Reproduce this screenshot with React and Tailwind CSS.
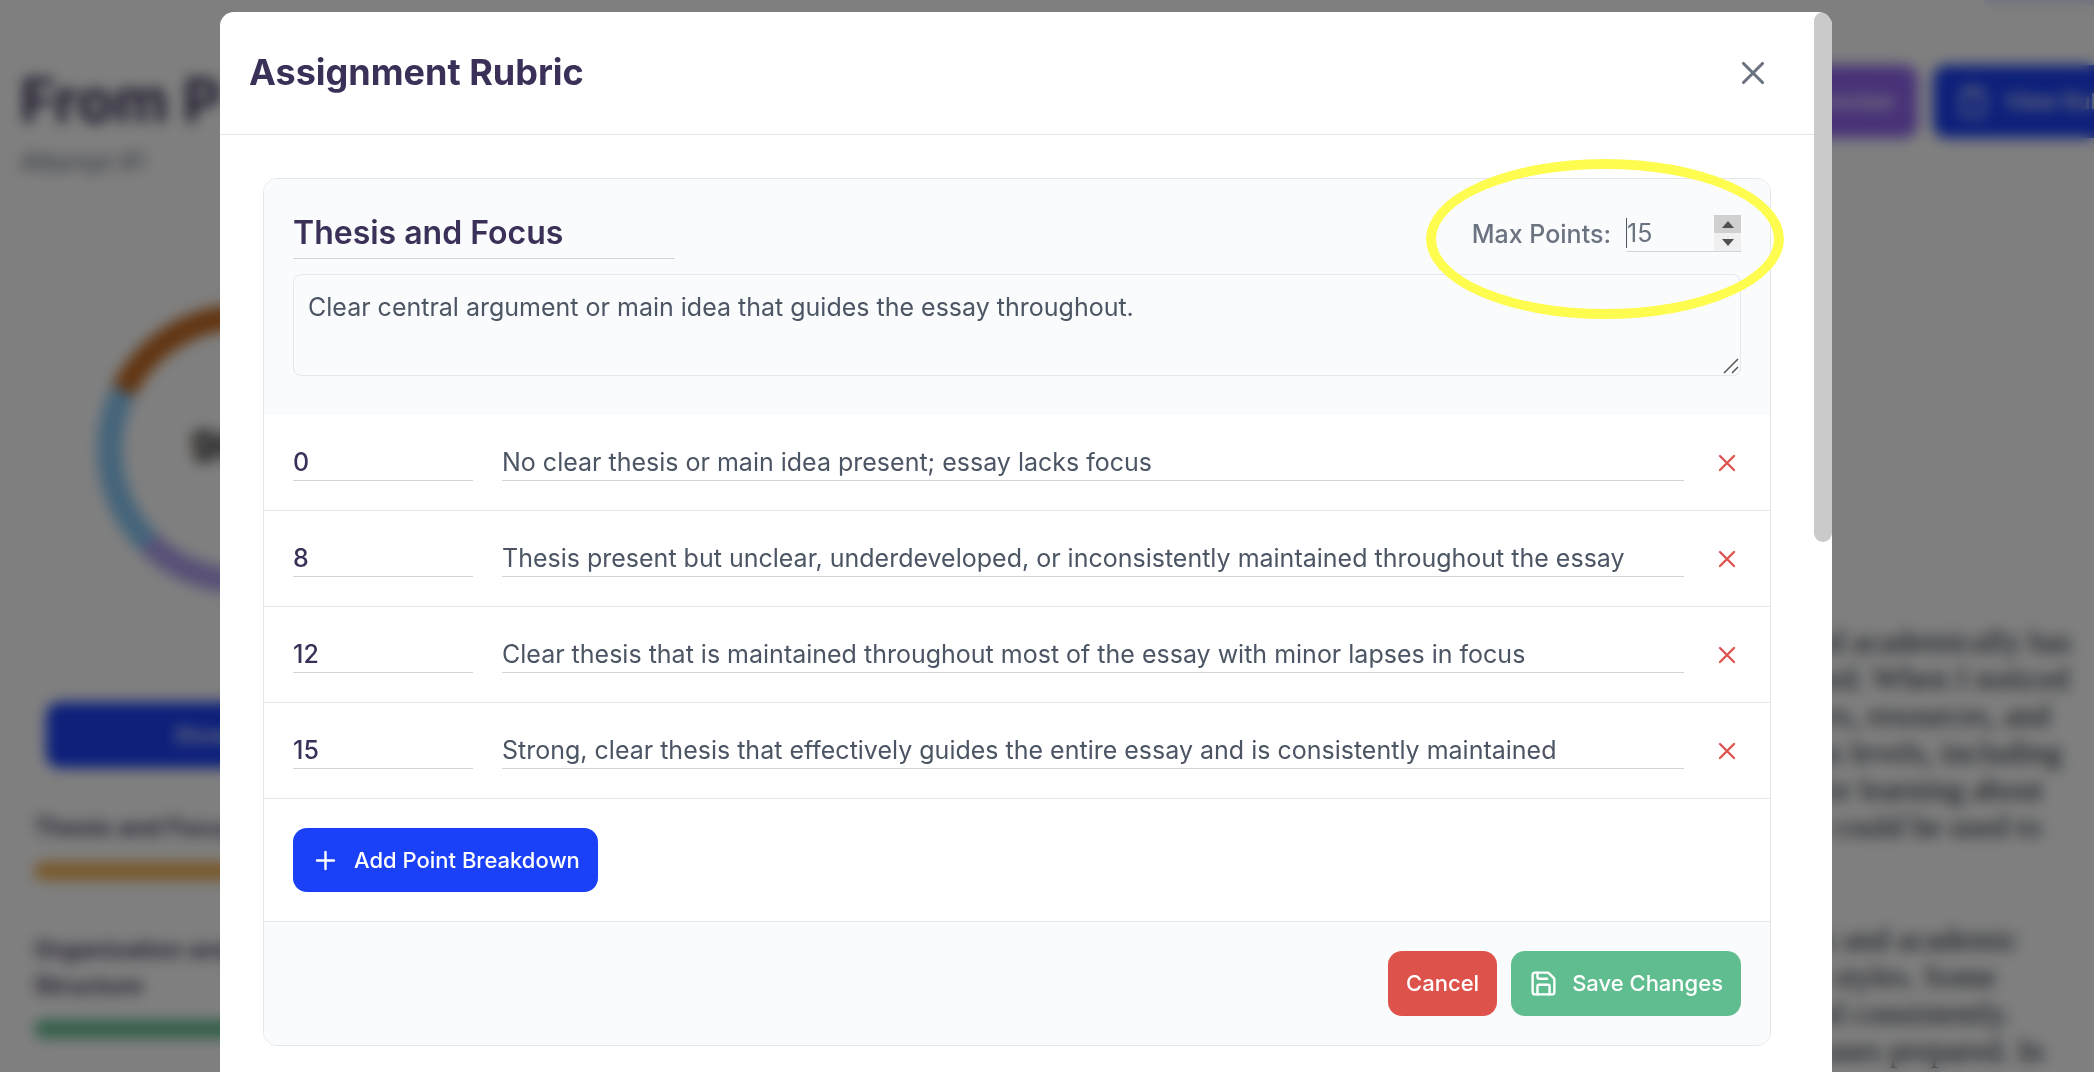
import { useState } from "react";
import { Clipboard, Save } from "lucide-react";

const levels = [
  { points: 0, text: "No clear thesis or main idea present; essay lacks focus" },
  { points: 8, text: "Thesis present but unclear, underdeveloped, or inconsistently maintained throughout the essay" },
  { points: 12, text: "Clear thesis that is maintained throughout most of the essay with minor lapses in focus" },
  { points: 15, text: "Strong, clear thesis that effectively guides the entire essay and is consistently maintained" },
];

const essay = [
  ["ed academically has", "sed. When I noticed", "ers, resources, and", "us levels, including", "for learning about", "I could be used to"],
  ["ts and academic", "s styles. Some", "ed consistently.", "cases prepared. In"],
];

function Cross({ className }) {
  return (
    <svg className={className} viewBox="0 0 24 24" fill="none" stroke="currentColor" strokeWidth="2" strokeLinecap="round" aria-hidden="true">
      <path d="M6 18 18 6M6 6l12 12" />
    </svg>
  );
}

function Plus({ className }) {
  return (
    <svg className={className} viewBox="0 0 24 24" fill="none" stroke="currentColor" strokeWidth="2" strokeLinecap="round" aria-hidden="true">
      <path d="M12 5v14m7-7H5" />
    </svg>
  );
}

function ScoreRing() {
  return (
    <svg className="h-[290px] w-[290px]" viewBox="0 0 290 290" fill="none" strokeWidth="25" role="img" aria-label="Score">
      <path d="M145 13A132 132 0 0 1 277 145A132 132 0 0 1 145 277" stroke="#60bd8f" />
      <path d="M26.5 87A132 132 0 0 1 145 13" stroke="#c46a22" />
      <path d="M52 239A132 132 0 0 1 26.5 87" stroke="#88c8f6" />
      <path d="M145 277A132 132 0 0 1 52 239" stroke="#b0a0ee" />
      <text x="145" y="158" textAnchor="middle" fill="#222" stroke="none" fontSize="44" fontWeight="700">90%</text>
    </svg>
  );
}

function ReportPage() {
  return (
    <main className="h-full overflow-hidden bg-white" aria-hidden="true">
      <div className="flex h-[200px] items-start justify-between pl-5">
        <div className="pt-16">
          <h1 className="text-[60px] leading-[72px] font-bold whitespace-nowrap text-[#3b3158]">From P</h1>
          <p className="pt-2 text-[25px] leading-9 text-gray-500">Attempt #1</p>
        </div>
        <div className="flex flex-col items-end">
          <div className="h-[5px] w-[110px] rounded-bl-lg bg-indigo-100" />
          <div className="flex gap-[15px] pt-[60px]">
            <button tabIndex={-1} className="h-[73px] w-[200px] rounded-[14px] bg-[#9065f0] pr-6 text-right text-[22px] font-medium text-white">Preview</button>
            <button tabIndex={-1} className="flex h-[73px] w-[161px] items-center gap-4 overflow-hidden rounded-l-[14px] bg-[#1a40f5] pl-6 text-[22px] font-medium whitespace-nowrap text-white">
              <Clipboard className="size-[32px] shrink-0" strokeWidth={2} />
              View Rubric
            </button>
          </div>
        </div>
      </div>
      <div className="flex items-start justify-between">
        <div className="flex w-[400px] flex-col pt-[104px] pl-[34px]">
          <div className="pl-[63px]"><ScoreRing /></div>
          <div className="pt-[108px] pl-3">
            <button tabIndex={-1} className="h-[66px] w-full rounded-[14px] bg-[#1a40f5] pl-32 text-left text-[22px] font-medium text-white">Show Details</button>
          </div>
          <p className="pt-[42px] text-[24px] leading-9 font-semibold whitespace-nowrap text-[#3b3158]">Thesis and Focus</p>
          <div className="mt-4 h-[18px] rounded-full bg-[#f0b050]" />
          <p className="w-[240px] pt-[52px] text-[24px] leading-9 font-semibold text-[#3b3158]">Organization and Structure</p>
          <div className="mt-4 h-[18px] rounded-full bg-[#60bd8f]" />
        </div>
        <div className="w-[280px] pt-[423px] font-['Liberation_Serif',serif] text-[32px] leading-[37px] whitespace-nowrap text-gray-900">
          {essay.map((lines, i) => (
            <p key={i} className="pb-[76px]">
              {lines.map((line) => (
                <span key={line} className="block">{line}</span>
              ))}
            </p>
          ))}
        </div>
      </div>
    </main>
  );
}

function LevelRow({ level, index }) {
  return (
    <li className="flex items-center gap-[29px] border-b border-[#e5e7eb] px-[29px] py-[29px]">
      <input
        aria-label={`Level ${index + 1} points`}
        defaultValue={level.points}
        inputMode="numeric"
        className="h-[37px] w-[180px] border-b border-[#d1d5db] bg-transparent pt-[2px] text-[25px] font-medium text-[#3b3158] outline-none"
      />
      <input
        aria-label={`Level ${index + 1} description`}
        defaultValue={level.text}
        className="h-[37px] min-w-0 flex-1 border-b border-[#d1d5db] bg-transparent pt-[2px] text-[25px] text-[#4b5563] outline-none"
      />
      <button aria-label={`Remove level ${index + 1}`} className="text-[#de524c]">
        <Cross className="size-7" />
      </button>
    </li>
  );
}

function MaxPoints() {
  const [value, setValue] = useState(15);
  return (
    <div className="flex items-center gap-[15px]">
      <label htmlFor="max-points" className="text-[25px] leading-9 font-medium text-[#6b7280]">Max Points:</label>
      <div className="flex h-[37px] w-[115px] border-b border-[#d1d5db]">
        <span className="my-[3px] w-px shrink-0 bg-[#4b5563]" />
        <input
          id="max-points"
          inputMode="numeric"
          value={value}
          onChange={(e) => setValue(Number(e.target.value) || 0)}
          className="h-9 min-w-0 flex-1 bg-transparent pt-[2px] text-[25px] text-[#6b7280] outline-none"
        />
        <div className="flex w-[27px] flex-col">
          <button aria-label="Increase" onClick={() => setValue(value + 1)} className="flex flex-1 items-center justify-center bg-[#d0d0d0]">
            <svg className="h-[7px] w-3" viewBox="0 0 12 7" fill="#505050"><path d="M6 0l6 7H0z" /></svg>
          </button>
          <button aria-label="Decrease" onClick={() => setValue(value - 1)} className="flex flex-1 items-center justify-center bg-[#f0f0f0]">
            <svg className="h-[7px] w-3" viewBox="0 0 12 7" fill="#505050"><path d="M6 7L0 0h12z" /></svg>
          </button>
        </div>
      </div>
    </div>
  );
}

function CriterionCard() {
  return (
    <section className="relative rounded-[14px] border border-[#e5e7eb] bg-white">
      <div className="rounded-t-[13px] bg-[#fafbfc] px-[29px] pt-[29px] pb-[39px]">
        <div className="flex items-center justify-between">
          <input
            aria-label="Criterion name"
            defaultValue="Thesis and Focus"
            className="h-[51px] w-[382px] border-b border-[#d1d5db] bg-transparent pb-[2px] text-[32px] font-semibold text-[#3b3158] outline-none"
          />
          <MaxPoints />
        </div>
        <div className="relative pt-[15px]">
          <textarea
            aria-label="Criterion description"
            defaultValue="Clear central argument or main idea that guides the essay throughout."
            className="block h-[102px] w-full resize-none rounded-[8px] border border-[#e5e7eb] bg-transparent p-[14px] text-[25px] leading-9 text-[#4b5563] outline-none"
          />
          <svg className="absolute right-[2px] bottom-[2px] size-4" viewBox="0 0 16 16" stroke="#555" strokeWidth="1.5" aria-hidden="true">
            <path d="M1 15 15 1M9 15l6-6" />
          </svg>
        </div>
      </div>
      <ul>
        {levels.map((level, i) => (
          <LevelRow key={level.points} level={level} index={i} />
        ))}
      </ul>
      <div className="border-b border-[#e5e7eb] p-[29px]">
        <button className="flex h-16 items-center gap-[14px] rounded-[14px] bg-[#1a40f8] px-[18px] text-[22px] font-medium text-white">
          <Plus className="size-[29px]" />
          Add Point Breakdown
        </button>
      </div>
      <div className="flex justify-end gap-[14px] rounded-b-[13px] bg-[#fafbfc] p-[29px]">
        <button className="h-[65px] rounded-[14px] bg-[#de524c] px-[18px] text-[22px] font-medium text-white">Cancel</button>
        <button className="flex h-[65px] items-center gap-[14px] rounded-[14px] bg-[#60bd8f] px-[18px] text-[22px] font-medium text-white">
          <Save className="size-[29px]" strokeWidth={2} />
          Save Changes
        </button>
      </div>
      <div className="pointer-events-none absolute -top-5 -right-[14px] h-40 w-[358px] rounded-[50%] border-[10px] border-[#fffc50]" />
    </section>
  );
}

export default function App() {
  return (
    <div className="relative h-screen overflow-hidden font-['Inter',sans-serif]">
      <ReportPage />
      <div className="absolute inset-0 flex bg-black/50 pt-3 pr-[262px] pl-[220px] backdrop-blur-[7px]">
        <div role="dialog" aria-modal="true" aria-labelledby="rubric-title" className="flex min-w-0 flex-1 overflow-hidden rounded-t-[14px] bg-white">
          <div className="min-w-0 flex-1">
            <header className="flex h-[123px] items-center justify-between border-b border-[#e5e7eb] pr-[42px] pl-[29px]">
              <h2 id="rubric-title" className="pb-[2px] text-[36px] leading-[44px] font-bold text-[#3b3158]">Assignment Rubric</h2>
              <button aria-label="Close" className="text-[#6b7280]">
                <Cross className="size-[38px]" />
              </button>
            </header>
            <div className="p-[43px]">
              <CriterionCard />
            </div>
          </div>
          <div className="w-[18px] shrink-0">
            <div className="h-1/2 rounded-full bg-[#cacaca]" />
          </div>
        </div>
      </div>
    </div>
  );
}
